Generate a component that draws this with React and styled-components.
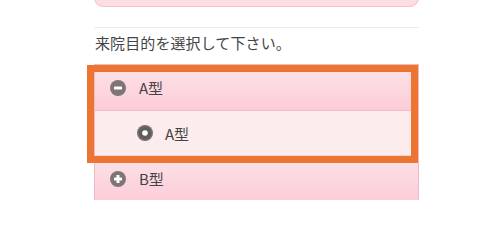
import React from 'react';
import styled, { createGlobalStyle } from 'styled-components';

const GlobalStyle = createGlobalStyle`
  html, body {
    margin: 0;
    padding: 0;
    background: #fff;
    overflow: hidden;
  }
  body {
    font-family: "Noto Sans CJK JP", "Noto Sans", sans-serif;
    color: #444;
  }
`;

const items = [
  { id: 'a', label: 'A型', open: true, children: ['A型'] },
  { id: 'b', label: 'B型', open: false, children: [] },
];

const App = () => {
  return (
    <Page>
      <GlobalStyle />
      <Column>
        <TopBox />
        <Divider />
        <Heading>来院目的を選択して下さい。</Heading>
        <ListWrap>
          <List>
            {items.map(item => (
              <React.Fragment key={item.id}>
                <GroupRow>
                  <ToggleIcon open={item.open} />
                  <Label>{item.label}</Label>
                </GroupRow>
                {item.open && item.children.map((child, i) => (
                  <ChildRow key={i}>
                    <RadioIcon />
                    <Label>{child}</Label>
                  </ChildRow>
                ))}
              </React.Fragment>
            ))}
          </List>
          <Highlight />
        </ListWrap>
      </Column>
    </Page>
  );
};

export default App;

const ToggleIcon = ({ open }) => (
  <Svg viewBox="0 0 16 16">
    <circle cx="8" cy="8" r="8" fill="#7f7575" />
    <rect x="4" y="6.5" width="8" height="3" rx="0.6" fill="#fff" />
    {!open && <rect x="6.5" y="4" width="3" height="8" rx="0.6" fill="#fff" />}
  </Svg>
);

const RadioIcon = () => (
  <Svg viewBox="0 0 16 16">
    <circle cx="8" cy="8" r="8" fill="#767070" />
    <circle cx="8" cy="8" r="6.5" fill="#625d5d" />
    <circle cx="8" cy="8" r="2.8" fill="#fff" />
  </Svg>
);

const Page = styled.div`
  width: 500px;
  height: 200px;
  overflow: hidden;
`;

const Column = styled.div`
  width: 325px;
  margin-left: 94px;
  display: flex;
  flex-direction: column;
`;

const TopBox = styled.div`
  height: 18px;
  margin-top: -11px;
  box-sizing: border-box;
  background: #fddde4;
  border: 1px solid #f5bfca;
  border-radius: 0 0 9px 9px;
`;

const Divider = styled.div`
  height: 1px;
  background: #ececec;
  margin-top: 20px;
`;

const Heading = styled.div`
  font-size: 15px;
  line-height: 20px;
  color: #444;
  margin-top: 5px;
  padding-left: 1px;
  letter-spacing: 0.1px;
`;

const ListWrap = styled.div`
  position: relative;
  margin-top: 11px;
`;

const List = styled.div`
  border: 1px solid #f2b8c4;
  border-bottom: none;
  display: flex;
  flex-direction: column;
`;

const GroupRow = styled.div`
  height: 45px;
  display: flex;
  align-items: center;
  gap: 13px;
  padding-left: 15px;
  background: linear-gradient(#fde2e8, #fccdd8);
  border-bottom: 1px solid #efbcc6;
`;

const ChildRow = styled.div`
  height: 44px;
  display: flex;
  align-items: center;
  gap: 12px;
  padding-left: 42px;
  background: #fcecee;
  border-bottom: 1px solid #f6d3d9;
`;

const Svg = styled.svg`
  width: 16px;
  height: 16px;
  flex: none;
`;

const Label = styled.span`
  font-size: 15px;
  color: #444;
  line-height: 1;
`;

const Highlight = styled.div`
  position: absolute;
  left: -7px;
  top: 1px;
  width: 331px;
  height: 98px;
  box-sizing: border-box;
  border: 7px solid #ed7532;
  pointer-events: none;
`;
